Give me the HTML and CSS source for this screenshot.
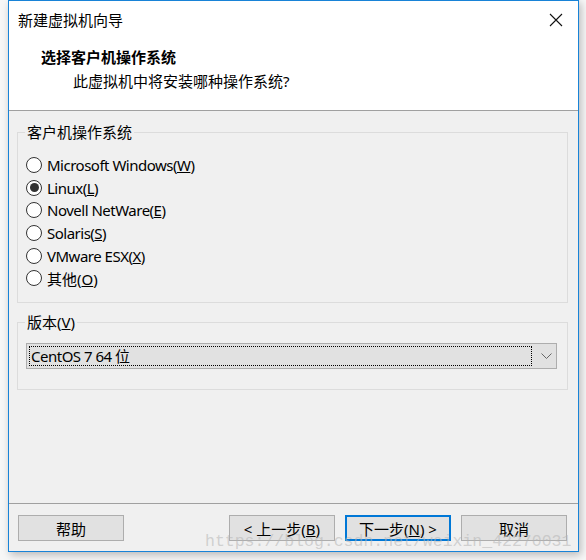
FILE: index.html
```html
<!DOCTYPE html>
<html lang="zh-CN">
<head>
    <meta charset="UTF-8">
    <title>新建虚拟机向导</title>
    <link rel="stylesheet" href="styles.css">
</head>
<body>
    <div class="window">
        <header class="top">
            <div class="titlebar">
                <span class="title">新建虚拟机向导</span>
                <span class="close">
                    <svg width="14" height="14" viewBox="0 0 14 14"><path d="M1 1L13 13M13 1L1 13" stroke="#111" stroke-width="1.1" fill="none"/></svg>
                </span>
            </div>
            <h1>选择客户机操作系统</h1>
            <p class="sub">此虚拟机中将安装哪种操作系统?</p>
        </header>

        <main class="content">
            <fieldset class="group os">
                <legend>客户机操作系统</legend>
                <ul class="radios">
                    <li><span class="radio"></span><span class="latin">Microsoft Windows(<u>W</u>)</span></li>
                    <li><span class="radio checked"></span><span class="latin">Linux(<u>L</u>)</span></li>
                    <li><span class="radio"></span><span class="latin">Novell NetWare(<u>E</u>)</span></li>
                    <li><span class="radio"></span><span class="latin">Solaris(<u>S</u>)</span></li>
                    <li><span class="radio"></span><span class="latin">VMware ESX(<u>X</u>)</span></li>
                    <li><span class="radio"></span><span>其他(<u>O</u>)</span></li>
                </ul>
            </fieldset>

            <fieldset class="group version">
                <legend>版本(<u>V</u>)</legend>
                <div class="combo">
                    <span class="focus latin">CentOS 7 64 位</span>
                    <span class="arrow">
                        <svg width="11" height="7" viewBox="0 0 11 7"><path d="M0.5 0.5L5.5 5.5L10.5 0.5" stroke="#666" stroke-width="1" fill="none"/></svg>
                    </span>
                </div>
            </fieldset>
        </main>

        <footer class="buttons">
            <button class="btn">帮助</button>
            <div class="spacer"></div>
            <button class="btn">&lt; 上一步(<u>B</u>)</button>
            <button class="btn default">下一步(<u>N</u>) &gt;</button>
            <button class="btn">取消</button>
            <span class="watermark">https://blog.csdn.net/weixin_42270031</span>
        </footer>
    </div>
</body>
</html>
```

FILE: styles.css
```css
* {
    box-sizing: border-box;
    margin: 0;
    padding: 0;
}

body {
    font-family: "Noto Sans", "Noto Sans CJK SC", sans-serif;
    font-size: 15px;
    color: #000;
    background: #f7f7f7;
    width: 586px;
    height: 560px;
    overflow: hidden;
}

.window {
    margin-left: 8px;
    width: 571px;
    height: 552px;
    border: 1px solid #1883d7;
    background: #f0f0f0;
    display: flex;
    flex-direction: column;
    position: relative;
    box-shadow: 2px 3px 8px rgba(0, 0, 0, 0.25);
}

.top {
    background: #fff;
    height: 110px;
    border-bottom: 1px solid #a0a0a0;
}

.titlebar {
    height: 38px;
    display: flex;
    align-items: center;
    justify-content: space-between;
    padding: 0 15px 0 9px;
}

.title {
    line-height: 20px;
}

.close {
    display: flex;
}

h1 {
    font-size: 15px;
    font-weight: bold;
    line-height: 20px;
    padding-left: 32px;
    margin-top: 8px;
}

.sub {
    line-height: 20px;
    padding-left: 64px;
    margin-top: 4px;
}

.content {
    flex: 1;
    padding: 11px 10px 0 8px;
}

.group {
    border: 1px solid #dcdcdc;
    padding: 0 0 0 7px;
}

legend {
    line-height: 20px;
    padding: 0 2px;
}

.os {
    height: 181px;
}

.radios {
    list-style: none;
    margin-top: 12px;
}

.radios li {
    height: 22.6px;
    display: flex;
    align-items: center;
    gap: 5px;
    margin-left: 1px;
}

.latin {
    letter-spacing: -0.5px;
}

.radio {
    width: 16px;
    height: 16px;
    border: 1px solid #333;
    border-radius: 50%;
    background: #fff;
    display: flex;
    align-items: center;
    justify-content: center;
}

.radio.checked::after {
    content: "";
    width: 9px;
    height: 9px;
    border-radius: 50%;
    background: #333;
}

.version {
    height: 78px;
    margin-top: 9px;
}

.combo {
    margin-top: 11px;
    margin-left: 1px;
    width: 531px;
    height: 26px;
    background: #e1e1e1;
    border: 1px solid #adadad;
    display: flex;
    align-items: center;
    padding: 2px;
}

.focus {
    width: 503px;
    height: 20px;
    border: 1px dotted #000;
    line-height: 18px;
    padding-left: 1px;
}

.arrow {
    display: flex;
    margin-left: 9px;
}

.buttons {
    height: 48px;
    border-top: 1px solid #a0a0a0;
    display: flex;
    align-items: flex-start;
    gap: 10px;
    padding: 11px 11px 0 9px;
    position: relative;
}

.spacer {
    flex: 1;
}

.btn {
    font-family: inherit;
    font-size: 15px;
    width: 106px;
    height: 26px;
    background: #e1e1e1;
    border: 1px solid #adadad;
    color: #000;
}

.btn.default {
    border: 2px solid #0078d7;
}

.watermark {
    position: absolute;
    left: 196px;
    top: 28px;
    font-family: "Liberation Mono", monospace;
    font-size: 16.5px;
    color: rgba(180, 180, 180, 0.55);
    pointer-events: none;
}
```
